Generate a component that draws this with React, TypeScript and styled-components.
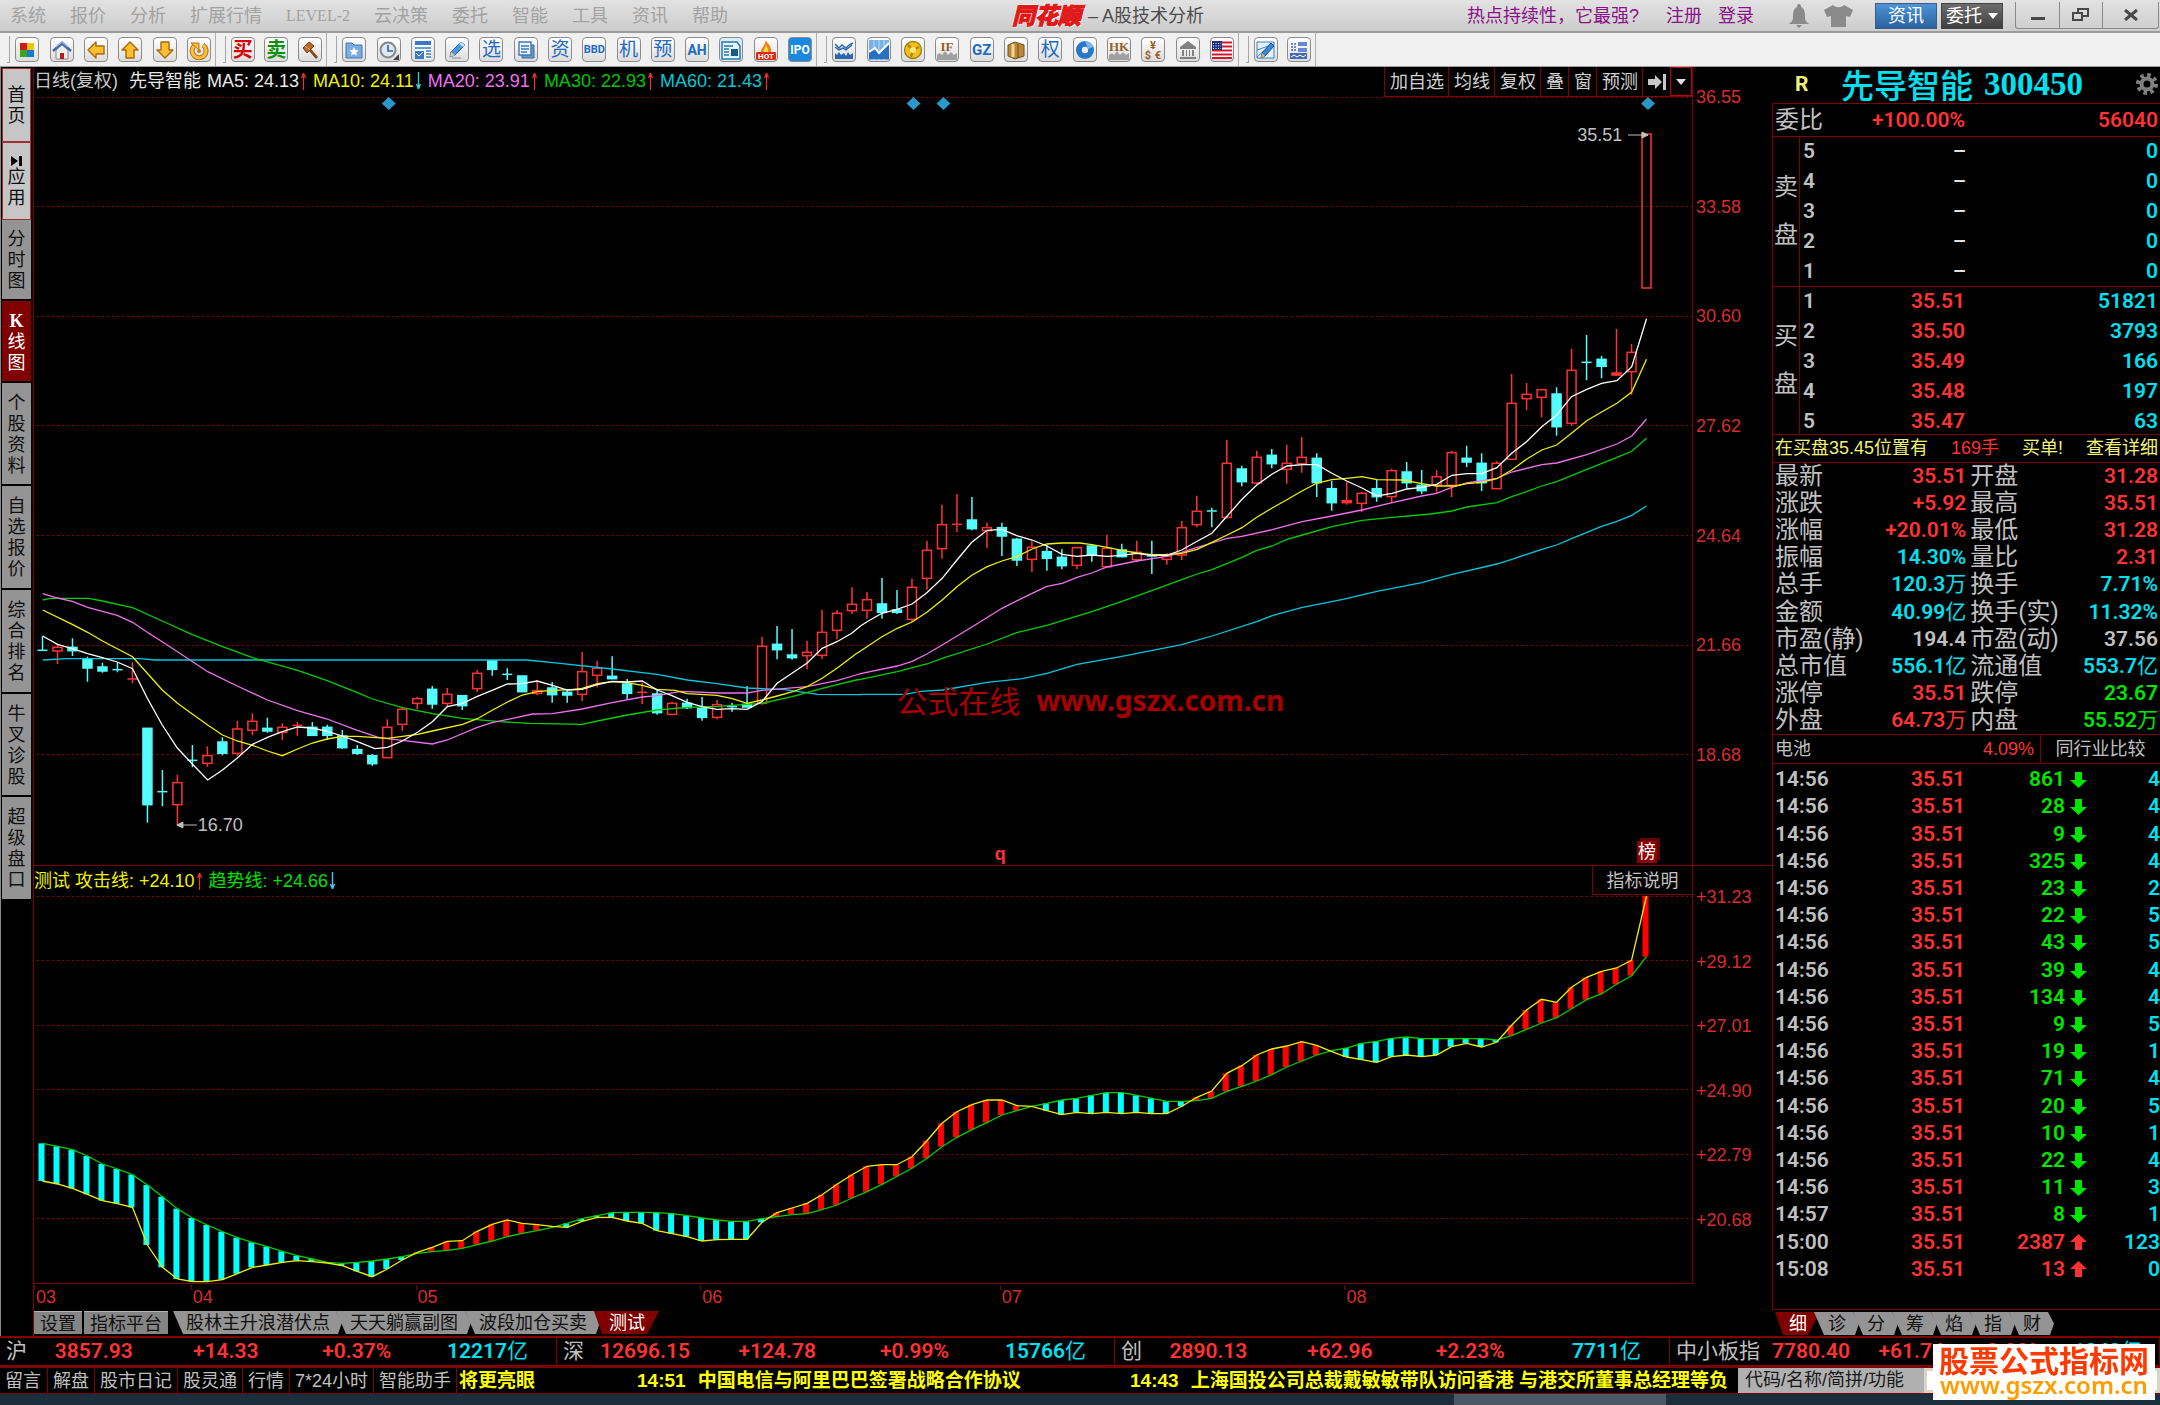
import React from "react";
import styled, { createGlobalStyle, css } from "styled-components";

const SANS = '"Liberation Sans", "Noto Sans CJK SC", sans-serif';
const DIGIT = 'Roboto, "Noto Sans CJK SC", sans-serif';
const RED = "#ff3232";
const CYAN = "#00e0f0";
const GREEN = "#00e600";
const LINE = "#800000";
const GRAY = "#c0c0c0";

const Global = createGlobalStyle`
  * { box-sizing: border-box; }
  body { margin: 0; background: #000; color: ${GRAY}; font: 18px/24px ${SANS}; overflow-x: hidden; }
  button { font: inherit; color: inherit; background: none; border: 0; padding: 0; margin: 0; white-space: nowrap; cursor: pointer; }
  a { color: inherit; text-decoration: none; }
  table { border-collapse: collapse; }
  td, th { padding: 0; font-weight: inherit; text-align: left; }
`;

const Page = styled.div`
  display: flex;
  flex-direction: column;
  min-height: 100vh;
`;

/* ---------- title bar ---------- */
const TitleBar = styled.header`
  display: flex;
  align-items: center;
  justify-content: space-between;
  height: 33px;
  background: linear-gradient(#e2e2e2, #cdcdcd);
  border-bottom: 2px solid #9a9a9a;
`;
const Menu = styled.nav`
  flex: 1 1 0;
  display: flex;
  gap: 24px;
  padding-left: 10px;
  color: #a2a2a2;
`;
const MenuItem = styled.button<{ $serif?: boolean }>`
  ${(p) => p.$serif && css`font: 16px/24px "Liberation Serif", serif;`}
`;
const Caption = styled.div`
  display: flex;
  align-items: center;
  gap: 7px;
  padding-left: 46px;
  color: #4c4c4c;
`;
const Brand = styled.strong`
  font-size: 23px;
  line-height: 28px;
  font-weight: 900;
  font-style: italic;
  color: #e01818;
  text-shadow: 0 0 2px #fff, 1px 1px 0 #fff, -1px -1px 0 #fff;
  -webkit-text-stroke: 1px #e01818;
`;
const TitleRight = styled.div`
  flex: 1 1 0;
  display: flex;
  align-items: center;
  justify-content: flex-end;
  color: #8a108a;
  white-space: nowrap;
`;
const TitleLink = styled.a<{ $gap: number }>`
  margin-right: ${(p) => p.$gap}px;
`;
const TitleIcon = styled.button<{ $gap: number }>`
  display: flex;
  color: #8a8a8a;
  margin-right: ${(p) => p.$gap}px;
`;
const PillButton = styled.button<{ $dark?: boolean }>`
  display: flex;
  align-items: center;
  justify-content: center;
  gap: 6px;
  width: 62px;
  height: 26px;
  margin-right: 4px;
  border: 1px solid #3c5c80;
  background: linear-gradient(#4c94d8, #2a62a0);
  color: #fff;
  ${(p) => p.$dark && css`background: linear-gradient(#6c6c6c, #404040); border-color: #444;`}
`;
const Caret = styled.span<{ $c: string }>`
  border: 5px solid transparent;
  border-top: 6px solid ${(p) => p.$c};
  border-bottom: 0;
`;
const WindowButtons = styled.div`
  display: flex;
  margin: 0 1px 0 8px;
  border: 1px solid #888;
  border-top: 0;
  border-radius: 0 0 3px 3px;
`;
const WindowButton = styled.button<{ $w: number }>`
  display: flex;
  align-items: center;
  justify-content: center;
  width: ${(p) => p.$w}px;
  height: 26px;
  color: #484848;
  & + & { border-left: 1px solid #888; }
`;

/* ---------- toolbar ---------- */
const Toolbar = styled.div`
  display: flex;
  height: 34px;
  background: #f0f0f0;
  border-bottom: 1px solid #a0a0a0;
`;
const ToolGroup = styled.div<{ $w: number }>`
  display: flex;
  align-items: center;
  justify-content: space-between;
  width: ${(p) => p.$w}px;
  padding: 0 4px 0 7px;
  border-right: 1px solid #b0b0b0;
  &::before {
    content: "";
    width: 2px;
    height: 26px;
    margin-right: -5px;
    border-right: 1px solid #a8a8a8;
    border-bottom: 1px solid #a8a8a8;
  }
`;
const Tile = styled.button<{ $c?: string; $s?: number; $bg?: string }>`
  display: flex;
  align-items: center;
  justify-content: center;
  width: 24px;
  height: 25px;
  border: 1px solid #8c8c8c;
  border-radius: 4px;
  overflow: hidden;
  background: ${(p) => p.$bg || "linear-gradient(#ffffff, #dcdcdc)"};
  color: ${(p) => p.$c || "#1f6cc0"};
  font: ${(p) => (p.$s ? 700 : 400)} ${(p) => p.$s || 19}px/22px Roboto, "Noto Sans CJK SC", sans-serif;
  svg { width: 20px; height: 20px; flex: none; }
`;

/* ---------- body columns ---------- */
const Columns = styled.div`
  display: flex;
`;
const SideTabs = styled.nav`
  flex: none;
  width: 34px;
  padding: 1px 2px 0 1px;
  border-left: 1px solid #888;
  border-right: 1px solid ${LINE};
  display: flex;
  flex-direction: column;
`;
const SideTab = styled.button<{ $h: number; $kind?: "light" | "active" }>`
  display: flex;
  flex-direction: column;
  align-items: center;
  justify-content: center;
  height: ${(p) => p.$h}px;
  border: 1px solid #000;
  border-width: 0 0 2px;
  padding-top: 2px;
  line-height: 21px;
  background: #949494;
  color: #101010;
  ${(p) => p.$kind === "light" && css`background: #c6c6c6; border: 1px solid #a03030;`}
  ${(p) => p.$kind === "active" && css`background: #800000; color: #fff;`}
`;
const SerifK = styled.span`
  font: bold 18px/21px "Liberation Serif", serif;
`;
const Center = styled.main`
  flex: 1 1 0;
  min-width: 0;
  display: flex;
  flex-direction: column;
`;
const Section = styled.section`
  display: flex;
  & + & { border-top: 1px solid ${LINE}; }
`;
const PlotColumn = styled.div<{ $floor?: boolean }>`
  flex: 1 1 0;
  min-width: 0;
  position: relative;
  border-right: 1px solid ${LINE};
  ${(p) => p.$floor && css`border-bottom: 1px solid ${LINE};`}
`;
const PlotHead = styled.div`
  display: flex;
  justify-content: space-between;
  height: 30px;
`;
const Legend = styled.div<{ $h: number }>`
  display: flex;
  align-items: center;
  gap: 6px;
  height: ${(p) => p.$h}px;
  white-space: nowrap;
`;
const LegendItem = styled.span<{ $c: string; $wide?: boolean }>`
  display: flex;
  align-items: center;
  gap: 1px;
  color: ${(p) => p.$c};
  ${(p) => p.$wide && css`margin-right: 5px;`}
`;
const Tools = styled.div`
  display: flex;
  height: 30px;
  border-bottom: 1px solid ${LINE};
`;
const Tool = styled.button<{ $hot?: boolean }>`
  display: flex;
  align-items: center;
  padding: 0 4px 0 5px;
  border-left: 1px solid ${LINE};
  color: #d0d0d0;
  ${(p) => p.$hot && css`border: 1px solid #c00000; padding: 0 5px;`}
`;
const Plot = styled.svg<{ $h: number }>`
  display: block;
  width: 100%;
  height: ${(p) => p.$h}px;
`;
const Axis = styled.div<{ $top: number; $h: number }>`
  flex: none;
  width: 79px;
  height: ${(p) => p.$top + p.$h}px;
  padding: ${(p) => p.$top}px 0 0 3px;
  display: flex;
  flex-direction: column;
  justify-content: space-between;
  line-height: 20px;
  color: #d82c2c;
`;
const Mark = styled.div<{ $x: number; $y: number; $c?: string }>`
  position: absolute;
  left: ${(p) => (p.$x / 1660) * 100}%;
  top: ${(p) => p.$y}px;
  display: flex;
  align-items: center;
  line-height: 20px;
  white-space: nowrap;
  color: ${(p) => p.$c || GRAY};
`;
const Watermark = styled.a`
  position: absolute;
  left: 52%;
  top: 611px;
  display: flex;
  align-items: center;
  gap: 16px;
  color: #a80000;
  font: 31px/44px "Noto Sans CJK SC", sans-serif;
  white-space: nowrap;
`;
const Domain = styled.span`
  font: bold 28px/44px "Noto Sans", sans-serif;
`;
const Badge = styled.span`
  padding: 0 1px;
  line-height: 22px;
  background: #900000;
  color: #fff;
  box-shadow: 3px -3px 0 #5a0808;
`;
const ExplainButton = styled.button`
  position: absolute;
  right: 0;
  top: 0;
  width: 100px;
  height: 29px;
  padding-top: 2px;
  border: 1px solid ${LINE};
  border-width: 0 0 1px 1px;
`;
const Months = styled.div`
  position: relative;
  height: 27px;
  margin-right: 80px;
`;
const Month = styled.span<{ $x: number }>`
  position: absolute;
  left: ${(p) => (p.$x / 1660) * 100}%;
  top: 1px;
  padding-left: 2px;
  color: #d82c2c;
  &::before { content: ""; position: absolute; left: 0; top: 0; height: 5px; border-left: 1px solid ${LINE}; }
`;
const BottomTabs = styled.div`
  display: flex;
  height: 24px;
  color: #101010;
`;
const PlainTab = styled.button`
  height: 23px;
  padding: 0 6px;
  margin-right: 2px;
  background: #858585;
  border-top: 1px solid #b0b0b0;
  line-height: 24px;
`;
const SlantTab = styled.button<{ $on?: boolean; $first?: boolean; $pad?: number }>`
  height: 23px;
  line-height: 25px;
  padding: 0 ${(p) => (p.$pad || 12) - 1}px 0 ${(p) => p.$pad || 12}px;
  margin-left: ${(p) => (p.$first ? 3 : -6)}px;
  background: #949494;
  clip-path: polygon(0 0, calc(100% - 6px) 0, 100% 50%, calc(100% - 4px) 100%, 10px 100%);
  ${(p) => p.$on && css`background: #800000; color: #fff; clip-path: polygon(0 0, 100% 0, calc(100% - 12px) 100%, 8px 100%);`}
`;

/* ---------- quote panel ---------- */
const Panel = styled.aside`
  flex: none;
  width: 388px;
  display: flex;
  flex-direction: column;
`;
const PanelHead = styled.div`
  display: flex;
  align-items: center;
  height: 36px;
  padding: 0 2px 2px 23px;
  color: ${CYAN};
`;
const RTag = styled.span`
  width: 46px;
  color: #f0f078;
  font: bold 21px/30px ${DIGIT};
`;
const StockName = styled.h1`
  flex: 1;
  display: flex;
  align-items: center;
  gap: 11px;
  margin: 0;
  font: 500 33px/34px "Noto Sans CJK SC", sans-serif;
`;
const StockCode = styled.span`
  font: bold 33px/34px "Liberation Serif", serif;
`;
const PanelBox = styled.div`
  height: 1207px;
  border: 1px solid ${LINE};
  border-width: 1px 0 1px 1px;
  font: 500 21px/27px ${DIGIT};
`;
const Row = styled.div<{ $h: number }>`
  display: flex;
  align-items: center;
  height: ${(p) => p.$h}px;
  padding: 0 2px;
  border-bottom: 1px solid ${LINE};
`;
const Label = styled.span`
  font-size: 24px;
  font-weight: 400;
`;
const Num = styled.span<{ $c?: string; $w?: number }>`
  color: ${(p) => p.$c || RED};
  font-weight: 600;
  text-align: right;
  ${(p) => (p.$w ? css`width: ${p.$w}px;` : css`flex: 1;`)}
`;
const Book = styled.div`
  display: flex;
  height: 150px;
  padding-top: 1px;
  border-bottom: 1px solid ${LINE};
  & + & { height: 148px; }
`;
const BookSide = styled.div`
  width: 27px;
  margin-top: -1px;
  display: flex;
  flex-direction: column;
  align-items: center;
  justify-content: center;
  gap: 21px;
  border-right: 1px solid ${LINE};
  font-size: 24px;
  font-weight: 400;
`;
const Levels = styled.div`
  flex: 1;
  display: flex;
  flex-direction: column;
  gap: 3px;
`;
const Level = styled.div`
  display: flex;
  height: 27px;
  padding: 0 2px 0 3px;
`;
const Notice = styled(Row)`
  justify-content: space-between;
  padding-bottom: 2px;
  font: 18px/24px ${SANS};
  color: #f0f078;
`;
const Red = styled.span`
  color: ${RED};
`;
const Unit = styled.span`
  font-weight: 400;
`;
const QuoteTable = styled.table`
  width: 100%;
  height: 271px;
  td { height: 27px; line-height: 27px; white-space: nowrap; }
  th { font-size: 24px; line-height: 27px; font-weight: 400; padding-left: 2px; white-space: nowrap; width: 60px; }
`;
const ValueCell = styled.td<{ $c: string }>`
  && { text-align: right; }
  color: ${(p) => p.$c};
  font-weight: 600;
  padding-right: 2px;
  width: 133px;
`;
const Sector = styled(Row)`
  padding: 0;
  border-top: 1px solid ${LINE};
  font: 18px/24px ${SANS};
`;
const SectorCell = styled.a<{ $w: number; $r?: boolean }>`
  width: ${(p) => p.$w}px;
  padding: 0 6px 0 2px;
  text-align: ${(p) => (p.$r ? "right" : "left")};
`;
const Peer = styled.button`
  flex: 1;
  height: 100%;
  border-left: 1px solid ${LINE};
`;
const TickTable = styled.table`
  width: 100%;
  height: 517px;
  margin-top: 2px;
  table-layout: fixed;
  font-weight: 600;
  td { line-height: 27px; white-space: nowrap; }
`;
const TickCell = styled.td<{ $c: string; $w?: number; $r?: boolean }>`
  && { text-align: ${(p) => (p.$r ? "right" : "left")}; }
  width: ${(p) => (p.$w ? p.$w + "px" : "auto")};
  color: ${(p) => p.$c};
  padding-left: ${(p) => (p.$r ? 0 : 2)}px;
`;
const ArrowCell = styled.td`
  width: 30px;
  padding-left: 5px;
  svg { display: block; }
`;
const PanelTabs = styled(BottomTabs)`
  margin-top: 2px;
`;

/* ---------- status rows ---------- */
const IndexBar = styled.div`
  display: grid;
  grid-template-columns: 557fr 558fr 555fr 490fr;
  height: 32px;
  border: solid ${LINE};
  border-width: 2px 0 3px;
  font: 600 21px/27px ${DIGIT};
`;
const IndexCell = styled.div<{ $wide?: boolean }>`
  display: grid;
  grid-template-columns: ${(p) => (p.$wide ? "84px 90px 94px 100px 98px" : "21px 106fr 126fr 133fr 137fr")};
  padding: 0 ${(p) => (p.$wide ? 12 : 28)}px 0 6px;
  text-align: right;
  white-space: nowrap;
  border-right: 1px solid ${LINE};
  color: ${RED};
  b { font-weight: 400; color: ${GRAY}; text-align: left; font-size: 21px; }
  i { font-style: normal; color: ${CYAN}; }
`;
const NewsBar = styled.div`
  display: flex;
  height: 26px;
  border-bottom: 1px solid ${LINE};
`;
const NewsButton = styled.button`
  padding: 0 6px 0 5px;
  border-right: 1px solid ${LINE};
  & + & { padding: 0 5px; }
`;
const Ticker = styled.div`
  flex: 1 1 0;
  display: flex;
  overflow: hidden;
  padding-left: 2px;
  color: #ffff00;
  font: bold 19px/25px ${SANS};
  white-space: nowrap;
`;
const Story = styled.a<{ $w: number }>`
  flex: none;
  display: flex;
  gap: 12px;
  width: ${(p) => p.$w}px;
`;
const SearchLabel = styled.label`
  width: 186px;
  padding-left: 7px;
  background: #b0b0b0;
  color: #181818;
`;
const SearchInput = styled.input`
  width: 236px;
  border: 3px solid #d8d4c8;
  background: #fff;
  font: inherit;
`;
const Taskbar = styled.div`
  flex: 1;
  min-height: 12px;
  padding-left: 1454px;
  background: #1b2e3b;
  &::before { content: ""; display: block; width: 212px; height: 12px; background: #4a5963; }
`;
const SiteMark = styled.a`
  position: fixed;
  right: 5px;
  bottom: 5px;
  width: 222px;
  height: 56px;
  background: #fff;
  text-align: center;
  color: #ff3a00;
  font: bold 30px/31px "Noto Sans CJK SC", sans-serif;
  white-space: nowrap;
  span { display: block; font: 600 24px/20px "Noto Sans", sans-serif; color: #ff9c00; }
`;

/* ---------- series data ---------- */
type Candle = [string, number, number, number, number];
/* kind, high, body top, body bottom, low: thirds of a pixel below a base line */
const EARLY = `c 228 271 273 273|r 252 262 273 312|c 235 262 272 288|c 290 297 324 365|c 308 321 333 338|c 308 329 331 337|r 307 357 359 370|c 505 505 734 788|c 630 695 697 739|r 644 668 734 795|c 555 601 603 622|r 559 587 610 620|c 532 546 580 586|r 483 507 580 587|r 460 484 511 526|c 473 505 513 518|r 490 502 517 540|r 486 496 500 527|c 486 502 526 526|c 494 502 526 540|c 510 528 563 567|c 555 569 580 585|c 582 587 611 617|r 478 502 593 593|r 440 448 493 512|r 410 416 430 448|c 378 388 432 446|r 384 403 430 438|c 405 407 437 450|r 330 340 386 396|c 300 302 328 347|c 325 343 345 360|c 347 348 395 397|r 360 392 400 406|c 366 384 404 428|c 392 397 405 428|r 276 335 403 423|r 303 325 346 382|c 289 349 356 358|c 357 372 400 418|r 367 397 400 432|c 390 402 458 464|r 425 430 463 466|c 416 430 443 447|c 411 445 472 482|r 420 434 472 478|c 428 440 442 455|c 378 433 441 443|r 230 259 430 434|c 198 253 269 298|c 207 285 293 299|r 243 277 287 328|r 150 217 286 297|r 150 160 211 238|r 82 133 152 162`;
const LATE = `r 876 899 931 956|c 834 912 937 956|c 870 930 937 942|r 836 862 958 966|r 722 751 835 869|r 614 674 746 776|r 582 673 675 696|c 591 660 686 691|r 668 683 692 744|c 668 683 708 768|c 714 718 780 798|r 724 742 778 816|c 735 755 775 812|c 748 772 797 808|r 740 743 796 807|c 732 738 765 785|r 704 745 800 802|c 731 750 770 772|r 722 757 779 786|c 722 768 772 822|r 760 768 778 794|r 663 683 765 780|r 587 634 674 682|c 623 633 635 682|r 420 490 652 656|c 497 507 545 559|r 452 472 549 552|c 447 466 491 505|r 434 490 508 551|r 411 472 491 518|c 460 475 548 591|c 543 566 608 632|f 545 602 608 614|r 576 580 610 636|c 540 566 590 605|r 506 512 590 610|c 486 516 548 566|c 510 556 572 582|r 511 530 555 580|r 452 458 556 591|c 437 475 486 501|c 460 490 548 573|r 484 490 566 568|r 222 310 478 480|r 249 283 296 330|r 268 269 292 352|c 262 282 380 407|r 146 211 370 378|c 105 187 189 241|c 168 178 199 235|f 87 219 225 228|r 132 157 215 285|r -498 -498 -36 -36`;
const parseCandles = (s: string, base: number): Candle[] =>
  s.split("|").map((t) => {
    const [k, ...n] = t.split(" ");
    return [k, ...n.map((v) => base + Number(v) / 3)] as Candle;
  });
const CANDLES = [...parseCandles(EARLY, 560), ...parseCandles(LATE, 300)];
const candleX = (i: number) => 41.5 + 15 * i;

const K = 1568 / 860;
const curve = (early: string, late: string) => {
  const part = (s: string, x0: number, y0: number) =>
    s.split(" ").map((p) => {
      const [x, y] = p.split(",").map(Number);
      return `${(x0 + x / K).toFixed(1)},${(y0 + y / 3).toFixed(1)}`;
    });
  return [...part(early, 0, 560), ...part(late, 860, 300)].join(" ");
};
const AVERAGES = [
  { c: "#00c8e0", p: curve("76,300 120,296 255,296 280,300 960,300 1020,310 1115,327 1197,343 1252,360 1306,371 1361,384 1430,389 1490,403 1568,404", "0,1183 80,1183 110,1174 150,1170 231,1147 295,1136 340,1120 395,1093 477,1069 586,1034 641,1008 723,965 751,947 806,922 880,898 942,874 1024,848 1079,823 1161,792 1188,778 1243,748 1270,735 1297,716 1352,679 1380,664 1407,646 1434,618") },
  { c: "#00d000", p: curve("76,120 90,115 160,115 185,123 240,143 294,183 349,224 404,260 459,293 541,331 595,362 650,398 678,417 732,443 787,461 842,475 910,485 965,490 1060,493 1088,483 1142,465 1197,450 1252,442 1306,439 1388,430 1443,410 1470,398 1498,385 1560,360", "0,1138 67,1115 121,1092 149,1075 231,1032 285,998 340,976 422,935 477,904 531,872 586,839 614,822 641,809 696,772 723,751 751,738 778,718 806,705 860,680 915,661 970,652 1040,642 1079,633 1106,621 1161,608 1188,590 1215,575 1243,558 1270,545 1325,508 1380,472 1407,454 1434,415") },
  { c: "#f070f0", p: curve("76,101 103,114 130,124 158,142 212,166 240,187 267,217 294,245 322,275 377,335 431,378 486,420 541,452 595,477 650,511 690,533 732,541 787,552 814,540 869,502 896,488 970,462 1006,461 1060,447 1115,428 1170,411 1197,407 1240,394 1310,399 1361,399 1388,391 1470,380 1525,362 1560,345", "0,1121 67,1098 94,1084 121,1062 149,1035 204,980 258,925 313,880 340,859 368,850 395,832 422,819 450,801 504,783 559,769 586,757 614,742 641,729 669,715 696,709 751,689 806,665 860,648 915,630 970,608 1024,588 1051,580 1079,562 1106,549 1161,535 1188,516 1243,494 1270,489 1325,464 1380,432 1407,408 1434,357") },
  { c: "#f0f000", p: curve("76,150 130,193 158,217 185,243 240,290 267,340 294,390 322,430 349,462 377,495 404,525 431,543 459,556 486,573 513,587 541,567 568,549 595,537 623,529 650,529 705,535 732,529 760,523 787,513 842,493 869,476 896,451 924,426 951,405 978,395 1006,391 1040,389 1060,385 1088,371 1115,365 1142,368 1170,376 1197,388 1230,391 1252,401 1306,406 1334,416 1361,430 1388,420 1416,408 1443,396 1470,380 1498,355 1525,325 1560,281", "0,1053 39,1010 67,985 94,966 121,937 149,900 176,860 203,826 231,800 258,783 285,770 313,747 340,732 368,729 400,729 422,734 450,742 477,751 504,759 531,764 559,764 586,760 614,748 641,727 669,705 696,683 723,652 751,624 778,599 806,572 833,549 860,539 887,535 915,530 942,539 990,540 1024,551 1051,558 1085,558 1106,551 1133,547 1161,536 1188,510 1215,478 1243,450 1270,435 1297,400 1325,362 1352,336 1380,310 1407,276 1434,178") },
  { c: "#ffffff", p: curve("76,228 103,253 130,266 158,281 185,293 212,306 240,326 267,415 294,495 322,565 349,612 377,660 404,630 431,594 459,553 486,532 513,515 541,501 568,504 595,514 623,528 650,545 682,566 705,562 732,543 760,517 787,485 814,440 842,430 869,409 896,391 924,372 951,371 978,363 1006,376 1033,390 1060,388 1088,374 1115,364 1142,366 1170,363 1197,390 1224,407 1252,427 1279,440 1306,448 1334,446 1361,448 1388,425 1416,370 1443,340 1470,310 1498,265 1525,245 1552,220", "0,978 12,965 39,940 67,928 94,912 121,878 149,835 176,780 203,727 231,691 258,688 285,707 313,720 340,738 368,763 395,769 422,765 450,769 477,766 504,760 531,766 559,766 586,750 614,724 641,700 669,648 696,598 723,555 751,522 778,498 806,494 833,494 860,520 887,543 915,564 942,588 970,580 997,567 1024,562 1051,553 1079,526 1106,521 1133,521 1161,503 1188,460 1215,425 1243,380 1270,345 1297,290 1325,268 1352,250 1380,242 1407,200 1434,56") },
];

const nums = (s: string, base: number) => s.split(" ").map((v) => base + Number(v) / 3);
const TREND = [
  ...nums("913 922 932 951 975 990 1007 1038 1073 1109 1137 1158 1178 1196 1210 1223 1237 1250 1260 1270 1273 1270 1266 1260 1253 1243 1238 1234 1228 1217 1206 1193 1183 1175 1165 1153 1139 1130 1121 1120 1120 1121 1124 1130 1137 1143 1147 1147 1139 1133 1127 1124 1112 1098 1077", 840),
  ...nums("1118 1096 1072 1048 1018 983 955 932 911 888 875 862 853 843 838 829 821 821 829 838 847 847 845 838 817 802 786 767 744 726 708 695 687 673 667 658 654 659 659 659 659 659 663 650 631 612 596 569 542 524 496 470 413", 820),
];
const ATTACK = [
  ...nums("1026 1035 1048 1066 1085 1094 1105 1218 1285 1320 1328 1328 1322 1304 1285 1278 1270 1265 1268 1272 1280 1297 1313 1290 1263 1240 1225 1207 1205 1177 1156 1143 1153 1157 1162 1165 1147 1135 1135 1146 1153 1175 1184 1193 1206 1202 1201 1201 1150 1121 1107 1093 1067 1036 1007", 840),
  ...nums("1042 1037 1037 1013 965 913 878 857 843 843 860 862 875 887 880 884 880 884 880 884 884 862 835 816 763 740 708 690 681 668 679 698 714 722 730 713 708 713 708 683 673 684 670 619 573 541 550 505 475 457 447 424 231", 820),
];
const toPoints = (a: number[]) => a.map((y, i) => `${candleX(i)},${y.toFixed(1)}`).join(" ");

/* ---------- small drawings ---------- */
const Arrow = ({ up, c }: { up?: boolean; c: string }) => (
  <svg width="7" height="18" viewBox="0 0 7 18" fill="none" stroke={c}>
    {up ? <path d="M3.5 18V2M3.5 1l-2 5M3.5 1l2 5" strokeWidth="1.2" /> : <path d="M3.5 0V16M3.5 17l-2-5M3.5 17l2-5" strokeWidth="1.4" />}
  </svg>
);
const FatArrow = ({ up }: { up?: boolean }) => (
  <svg width="17" height="17" viewBox="0 0 17 17">
    <path fill={up ? RED : GREEN} d={up ? "M8.5 0L17 8H12V16H5V8H0Z" : "M8.5 17L17 9H12V1H5V9H0Z"} />
  </svg>
);
const Bank = (
  <svg viewBox="0 0 20 20" fill="#808080"><path d="M10 1l8 6v2H2V7zM4 10h2v6H4zM8 10h1v6H8zM11 10h1v6h-1zM14 10h2v6h-2zM2 17h16v2H2z" /></svg>
);
const arrowIcon = (r: number) => (
  <svg viewBox="0 0 20 20"><path transform={`rotate(${r} 10 10)`} d="M2 10L10 2V6H18V14H10V18Z" fill="#ffc030" stroke="#a86810" strokeWidth="1.4" strokeLinejoin="round" /></svg>
);
const I = {
  squares: <svg viewBox="0 0 20 20"><path fill="#d81818" d="M3 3h7v7H3z" /><path fill="#e8c800" d="M10 3h7v7h-7z" /><path fill="#38a818" d="M3 10h7v7H3z" /><path fill="#1878d8" d="M10 10h7v7h-7z" /></svg>,
  home: <svg viewBox="0 0 20 20"><path d="M4 10v9h12v-9l-6-5z" fill="#eee" stroke="#888" /><path d="M8 13h4v6H8z" fill="#b02020" /><path d="M1 11l9-8 9 8" fill="none" stroke="#4068b0" strokeWidth="2.4" /><path d="M4 7l6-5 6 5" fill="none" stroke="#88a8d8" strokeWidth="1.5" /></svg>,
  loop: <svg viewBox="0 0 20 20"><path d="M14 5a7 7 0 1 1-9 1" fill="none" stroke="#b87018" strokeWidth="5" /><path d="M14 5a7 7 0 1 1-9 1" fill="none" stroke="#ffc040" strokeWidth="3" /><path d="M2 3h8v7z" fill="#ffc040" stroke="#b87018" /><circle cx="10" cy="11" r="2" fill="#c88020" /></svg>,
  gavel: <svg viewBox="0 0 20 20"><path d="M11 9l7 8-2 2-7-8z" fill="#8a4a18" /><path d="M3 8l6-6 5 4-7 7z" fill="#b86828" stroke="#7a3c10" /><path d="M5 6l5 4" stroke="#e8b070" /></svg>,
  folder: <svg viewBox="0 0 20 20"><path d="M2 3h6l2 2h8v13H2z" fill="#7aace0" stroke="#3c78b8" /><path d="M10 7l1.4 3 3.2.3-2.4 2.2.7 3.2-2.9-1.7-2.9 1.7.7-3.2-2.4-2.2 3.2-.3z" fill="#fff" /></svg>,
  clock: <svg viewBox="0 0 20 20"><circle cx="9" cy="10" r="7.5" fill="#dce8f4" stroke="#888" strokeWidth="2" /><path d="M9 5v6h5" fill="none" stroke="#3060a8" strokeWidth="1.6" /><path d="M20 14v6h-6z" fill="#444" /></svg>,
  sheet: <svg viewBox="0 0 20 20"><path fill="#fff" d="M2 1h16v18H2z" /><path fill="#3878c8" d="M2 1h16v4H2zM2 11h9v8H2z" /><path d="M2 8h16M13 11h5M13 14h5M13 17h5" stroke="#3878c8" strokeWidth="1.4" /><path d="M3 13l3 3 4-4" stroke="#fff" fill="none" /></svg>,
  pencil: <svg viewBox="0 0 20 20"><path d="M3 17l1-5L14 2l4 3L8 15z" fill="#4898e0" stroke="#2868a8" /><path d="M3 17l1-5 4 3z" fill="#e8c898" /><path d="M14 2l4 3-2 2-4-3z" fill="#c8e0f8" /><path d="M5 18h9" stroke="#888" /></svg>,
  pages: <svg viewBox="0 0 20 20"><path d="M6 5h12v13H6z" fill="#6898c8" stroke="#386898" /><path d="M3 2h12v13H3z" fill="#eef5fc" stroke="#3c78b8" strokeWidth="1.4" /><path d="M5 6h8M5 9h8M5 12h6" stroke="#3c78b8" strokeWidth="1.3" /></svg>,
  news: <svg viewBox="0 0 20 20"><path d="M1 2h15l3 4v13H1z" fill="#e8f4fc" stroke="#2878a8" strokeWidth="1.5" /><path d="M3 6h9M3 9h5M3 12h5M3 15h5" stroke="#2878a8" strokeWidth="1.5" /><path d="M10 9h7v7h-7z" fill="#185888" /></svg>,
  hot: <svg viewBox="0 0 20 20"><path d="M10 0c1 4 6 5 5 13H5C4 9 8 8 10 0z" fill="#f08018" /><path d="M10 5c1 3 3 4 2 8H8c-1-3 1-4 2-8z" fill="#ffe040" /><rect y="12" width="20" height="8" rx="1" fill="#e02818" /><text x="10" y="19" textAnchor="middle" fontSize="8" fontWeight="bold" fill="#fff" fontFamily="Roboto">HOT</text></svg>,
  waves: <svg viewBox="0 0 20 20"><path d="M1 4l4 4 3-3 4 3 3-3 4-2M1 7l4 3 4-2 3 2 6-5" fill="none" stroke="#2868b0" strokeWidth="1.4" /><path d="M1 19v-6l2 2 2-3 2 3 3-2 2 3 2-4 2 3 3-2v6z" fill="#2868b0" /></svg>,
  chart: <svg viewBox="0 0 20 20"><path d="M0 0h20v20H0z" fill="#78b0e8" /><path d="M5 0v20M10 0v20M15 0v20" stroke="#b8d8f8" /><path d="M0 19v-7l6-4 4 5 10-9v15z" fill="#2870c0" /><path d="M0 12l6-4 4 5 10-10" fill="none" stroke="#fff" strokeWidth="2" /></svg>,
  coin: <svg viewBox="0 0 20 20"><circle cx="10" cy="10" r="8.5" fill="#f0c020" stroke="#a87c08" strokeWidth="1.3" /><path d="M10 10L5 5M10 10l6-3M10 10l-2 7" stroke="#b08808" strokeWidth="2.5" /><circle cx="10" cy="10" r="3" fill="#ffe878" /></svg>,
  barrel: <svg viewBox="0 0 20 20"><path d="M2 5l7-3 9 3v11l-9 3-7-3z" fill="#b88838" stroke="#785018" /><path d="M7 4v13" stroke="#f0d898" strokeWidth="3" /><path d="M12 4v14" stroke="#785018" /></svg>,
  disc: <svg viewBox="0 0 20 20"><circle cx="10" cy="10" r="9" fill="#2878c8" /><circle cx="10" cy="10" r="3.2" fill="#e8f0f8" /><path d="M10 1a9 9 0 0 1 8 6l-5 2z" fill="#78b8f0" /></svg>,
  flag: <svg viewBox="0 0 20 20"><path fill="#fff" d="M0 1h20v18H0z" /><path d="M0 2.5h20M0 6.5h20M0 10.5h20M0 14.5h20M0 18h20" stroke="#d01830" strokeWidth="2" /><path fill="#203080" d="M0 1h10v9H0z" /><path d="M1 3.5h8M1 6h8M1 8.5h8" stroke="#fff" strokeDasharray="1 1.5" /></svg>,
  draw: <svg viewBox="0 0 20 20"><path d="M1 2h17v16H1z" fill="#e4f0fc" stroke="#4080c0" /><path d="M1 10l17-6M1 17l10-9" stroke="#4080c0" /><path d="M5 18l1-5L15 3l3 3-9 10z" fill="#3888d8" stroke="#205090" /><path d="M5 18l1-5 3 3z" fill="#e8b060" /></svg>,
  layout: <svg viewBox="0 0 20 20"><path d="M2 4h5M2 7h5M2 10h5" stroke="#4868b0" strokeWidth="1.6" strokeDasharray="2 1" /><path d="M9 2h9v4H9zM9 8h9v4H9z" fill="#6888d0" /><path d="M1 13h17v6H1z" fill="#4868b0" /><path d="M2 17l3-2 3 2 3-2 3 2 3-2" stroke="#fff" fill="none" /></svg>,
  forex: <svg viewBox="0 0 20 20" fontSize="11" fontWeight="bold" fill="#98602c" fontFamily="Roboto"><text x="10" y="9" textAnchor="middle">¥</text><text x="5" y="19" textAnchor="middle">$</text><text x="15" y="19" textAnchor="middle">€</text></svg>,
};
const hill = (t: string) => (
  <svg viewBox="0 0 20 20"><path d="M0 20v-5l3-2 2 2 3-4 3 4 3-3 3 3 3-2v7z" fill="#a0a0a0" /><text x="10" y="11" textAnchor="middle" fontSize="13" fontWeight="bold" fill="#98602c" fontFamily="Liberation Serif">{t}</text></svg>
);

type ToolDef = { n: string; i?: React.ReactNode; t?: string; c?: string; s?: number; bg?: string };
const TOOL_GROUPS: { w: number; items: ToolDef[] }[] = [
  { w: 216, items: [{ n: "板块", i: I.squares }, { n: "主页", i: I.home }, { n: "后退", i: arrowIcon(0) }, { n: "上翻", i: arrowIcon(90) }, { n: "下翻", i: arrowIcon(270) }, { n: "刷新", i: I.loop }] },
  { w: 111, items: [{ n: "买入", t: "买", c: "#d80000", s: 20 }, { n: "卖出", t: "卖", c: "#109010", s: 20 }, { n: "交易", i: I.gavel }] },
  { w: 490, items: [{ n: "自选", i: I.folder }, { n: "分时", i: I.clock }, { n: "报表", i: I.sheet }, { n: "画笔", i: I.pencil }, { n: "选股", t: "选" }, { n: "研报", i: I.pages }, { n: "资金", t: "资" }, { n: "大单", t: "BBD", s: 11 }, { n: "机构", t: "机" }, { n: "预测", t: "预" }, { n: "AH股", t: "AH", s: 14 }, { n: "资讯", i: I.news, bg: "#d8ecf8" }, { n: "热点", i: I.hot }, { n: "新股", t: "IPO", s: 12, c: "#fff", bg: "#1888e0" }] },
  { w: 422, items: [{ n: "指数", i: I.waves }, { n: "走势", i: I.chart }, { n: "期货", i: I.coin }, { n: "股指", i: hill("IF") }, { n: "国债", t: "GZ", s: 15 }, { n: "原油", i: I.barrel }, { n: "权证", t: "权" }, { n: "基金", i: I.disc }, { n: "港股", i: hill("HK") }, { n: "外汇", i: I.forex }, { n: "银行", i: Bank }, { n: "美股", i: I.flag }] },
  { w: 77, items: [{ n: "画线", i: I.draw }, { n: "版面", i: I.layout }] },
];

const QUOTES: [string, string, string, string, string, string][] = [
  ["最新", "35.51", RED, "开盘", "31.28", RED],
  ["涨跌", "+5.92", RED, "最高", "35.51", RED],
  ["涨幅", "+20.01%", RED, "最低", "31.28", RED],
  ["振幅", "14.30%", CYAN, "量比", "2.31", RED],
  ["总手", "120.3万", CYAN, "换手", "7.71%", CYAN],
  ["金额", "40.99亿", CYAN, "换手(实)", "11.32%", CYAN],
  ["市盈(静)", "194.4", GRAY, "市盈(动)", "37.56", GRAY],
  ["总市值", "556.1亿", CYAN, "流通值", "553.7亿", CYAN],
  ["涨停", "35.51", RED, "跌停", "23.67", GREEN],
  ["外盘", "64.73万", RED, "内盘", "55.52万", GREEN],
];
const TICKS = "861 4,28 4,9 4,325 4,23 2,22 5,43 5,39 4,134 4,9 5,19 1,71 4,20 5,10 1,22 4,11 3,8 1,2387 123,13 0"
  .split(",")
  .map((t, i) => {
    const [v, n] = t.split(" ");
    return { time: i < 16 ? "14:56" : ["14:57", "15:00", "15:08"][i - 16], v, n, up: i > 16 };
  });
const SELL = ["5", "4", "3", "2", "1"];
const BUY = [["1", "35.51", "51821"], ["2", "35.50", "3793"], ["3", "35.49", "166"], ["4", "35.48", "197"], ["5", "35.47", "63"]];
const SIDE: { t: string; h: number; kind?: "light" | "active" }[] = [
  { t: "首页", h: 74, kind: "light" }, { t: "应用", h: 78, kind: "light" }, { t: "分时图", h: 81 }, { t: "K线图", h: 82, kind: "active" },
  { t: "个股资料", h: 103 }, { t: "自选报价", h: 104 }, { t: "综合排名", h: 104 }, { t: "牛叉诊股", h: 103 }, { t: "超级盘口", h: 104 },
];
const INDICES = [
  ["沪", "3857.93", "+14.33", "+0.37%", "12217亿"],
  ["深", "12696.15", "+124.78", "+0.99%", "15766亿"],
  ["创", "2890.13", "+62.96", "+2.23%", "7711亿"],
  ["中小板指", "7780.40", "+61.74", "+0.80%", "1243亿"],
];

const Amount = ({ v }: { v: string }) => {
  const unit = /[万亿]$/.test(v) ? v.slice(-1) : "";
  return <>{unit ? v.slice(0, -1) : v}{unit && <Unit>{unit}</Unit>}</>;
};

const Grid = ({ ys }: { ys: number[] }) => (
  <g stroke="#900000" strokeDasharray="2 3">
    {ys.map((y) => <line key={y} x1="36" x2="1693" y1={y} y2={y} />)}
  </g>
);

const MainPlot = () => (
  <Plot $h={768} viewBox="33 97 1659 768" preserveAspectRatio="none">
    <Grid ys={[97.5, 206.5, 316.5, 425.5, 535.5, 645.5, 754.5]} />
    {[388, 913, 943, 1648].map((x) => <path key={x} d={`M${x} 97l7 6.5-7 6.5-7-6.5z`} fill="#2898c8" />)}
    {CANDLES.map(([k, hi, top, bot, lo], i) => {
      const x = candleX(i);
      const h = bot - top;
      const c = k === "c" ? "#54fcfc" : RED;
      const flat = h < 1.5;
      return (
        <g key={i} stroke={c} strokeWidth="1.5" fill="none">
          <path d={`M${x} ${hi}V${top}M${x} ${bot}V${lo}`} />
          {flat ? <path d={`M${x - 5} ${top}h10`} /> : <rect x={x - 4.5} y={top} width="9" height={h} fill={k === "r" ? "none" : c} />}
        </g>
      );
    })}
    {AVERAGES.map((a) => <polyline key={a.c} points={a.p} fill="none" stroke={a.c} strokeWidth="1.3" />)}
    <path d="M176 825h20M176 825l6-3v6zM1648 135h-20M1648 135l-6-3v6z" stroke="#c0c0c0" fill="#c0c0c0" />
  </Plot>
);

const IndicatorPlot = () => (
  <Plot $h={388} viewBox="33 896 1659 388" preserveAspectRatio="none">
    <Grid ys={[897.5, 961.5, 1026.5, 1090.5, 1155.5, 1219.5]} />
    {TREND.map((g, i) => {
      const y = ATTACK[i];
      return <rect key={i} x={candleX(i) - 4} y={Math.min(g, y)} width="6" height={Math.abs(g - y)} fill={y < g ? "#ff0000" : "#00ffff"} />;
    })}
    <polyline points={toPoints(TREND)} fill="none" stroke="#00d000" strokeWidth="1.3" />
    <polyline points={toPoints(ATTACK)} fill="none" stroke="#f0f000" strokeWidth="1.3" />
  </Plot>
);

export default function App() {
  return (
    <Page>
      <Global />
      <TitleBar>
        <Menu>
          {["系统", "报价", "分析", "扩展行情", "LEVEL-2", "云决策", "委托", "智能", "工具", "资讯", "帮助"].map((m) => (
            <MenuItem key={m} $serif={m === "LEVEL-2"}>{m}</MenuItem>
          ))}
        </Menu>
        <Caption><Brand>同花顺</Brand><span>– A股技术分析</span></Caption>
        <TitleRight>
          <TitleLink href="#hot" $gap={27}>热点持续性，它最强?</TitleLink>
          <TitleLink href="#reg" $gap={16}>注册</TitleLink>
          <TitleLink href="#login" $gap={34}>登录</TitleLink>
          <TitleIcon $gap={14} aria-label="提醒">
            <svg width="22" height="24" viewBox="0 0 22 24" fill="currentColor"><path d="M11 0c2 0 2 2 2 3 4 2 4 6 4 11 0 3 2 4 4 6H1c2-2 4-3 4-6C5 9 5 5 9 3c0-1 0-3 2-3zM8 21h6l-3 3z" /></svg>
          </TitleIcon>
          <TitleIcon $gap={22} aria-label="皮肤">
            <svg width="29" height="22" viewBox="0 0 29 22" fill="currentColor"><path d="M9 0c3 3 8 3 11 0l9 5-3 7-4-1v11H7V11l-4 1-3-7z" /></svg>
          </TitleIcon>
          <PillButton>资讯</PillButton>
          <PillButton $dark>委托<Caret $c="#fff" /></PillButton>
          <WindowButtons>
            <WindowButton $w={43} aria-label="最小化"><svg width="14" height="14"><path d="M0 9h14v3H0z" fill="currentColor" /></svg></WindowButton>
            <WindowButton $w={43} aria-label="还原"><svg width="18" height="14" fill="none" stroke="currentColor" strokeWidth="2"><path d="M1 5h9v7H1zM6 5V1h10v7h-6" /></svg></WindowButton>
            <WindowButton $w={56} aria-label="关闭"><svg width="14" height="12" stroke="currentColor" strokeWidth="3"><path d="M1 1l12 10M13 1L1 11" /></svg></WindowButton>
          </WindowButtons>
        </TitleRight>
      </TitleBar>
      <Toolbar>
        {TOOL_GROUPS.map((g, k) => (
          <ToolGroup key={k} $w={g.w}>
            {g.items.map((t) => <Tile key={t.n} aria-label={t.n} $c={t.c} $s={t.s} $bg={t.bg}>{t.i || t.t}</Tile>)}
          </ToolGroup>
        ))}
      </Toolbar>

      <Columns>
        <SideTabs>
          {SIDE.map((s) => (
            <SideTab key={s.t} $h={s.h} $kind={s.kind}>
              {s.t === "应用" && <svg width="12" height="12" viewBox="0 0 12 12"><path d="M0 1l7 5-7 5zM8 1h3v10H8z" /></svg>}
              {[...s.t].map((ch) => (ch === "K" ? <SerifK key={ch}>K</SerifK> : <span key={ch}>{ch}</span>))}
            </SideTab>
          ))}
        </SideTabs>

        <Center>
          <Section>
            <PlotColumn>
              <PlotHead>
                <Legend $h={28}>
                  <LegendItem $c="#c8c8c8" $wide>日线(复权)</LegendItem>
                  <LegendItem $c="#e8e8e8">先导智能</LegendItem>
                  <LegendItem $c="#e8e8e8">MA5: 24.13<Arrow up c="#f03030" /></LegendItem>
                  <LegendItem $c="#f0f000">MA10: 24.11<Arrow c="#40c8c8" /></LegendItem>
                  <LegendItem $c="#f070f0">MA20: 23.91<Arrow up c="#f03030" /></LegendItem>
                  <LegendItem $c="#00c800">MA30: 22.93<Arrow up c="#f03030" /></LegendItem>
                  <LegendItem $c="#00c8d8">MA60: 21.43<Arrow up c="#f03030" /></LegendItem>
                </Legend>
                <Tools>
                  {["加自选", "均线", "复权", "叠", "窗", "预测"].map((t) => <Tool key={t}>{t}</Tool>)}
                  <Tool aria-label="跳到最新"><svg width="18" height="18" viewBox="0 0 18 18" fill="#c8c8c8"><path d="M0 6h7V2l7 7-7 7v-4H0zM15 1h3v16h-3z" /></svg></Tool>
                  <Tool $hot aria-label="更多"><Caret $c="#e0e0e0" /></Tool>
                </Tools>
              </PlotHead>
              <MainPlot />
              <Watermark href="#site">公式在线<Domain>www.gszx.com.cn</Domain></Watermark>
              <Mark $x={1545} $y={58}>35.51</Mark>
              <Mark $x={164} $y={748}>16.70</Mark>
              <Mark $x={962} $y={777} $c={RED}><b>q</b></Mark>
              <Mark $x={1605} $y={774}><Badge>榜</Badge></Mark>
            </PlotColumn>
            <Axis $top={20} $h={678}>
              {["36.55", "33.58", "30.60", "27.62", "24.64", "21.66", "18.68"].map((v) => <span key={v}>{v}</span>)}
            </Axis>
          </Section>
          <Section>
            <PlotColumn $floor>
              <Legend $h={29}>
                <LegendItem $c="#f0f000">测试 攻击线: +24.10<Arrow up c="#f03030" /></LegendItem>
                <LegendItem $c="#00e000">趋势线: +24.66<Arrow c="#40c8f0" /></LegendItem>
              </Legend>
              <IndicatorPlot />
              <ExplainButton>指标说明</ExplainButton>
            </PlotColumn>
            <Axis $top={21} $h={343}>
              {["+31.23", "+29.12", "+27.01", "+24.90", "+22.79", "+20.68"].map((v) => <span key={v}>{v}</span>)}
            </Axis>
          </Section>
          <Months>
            {([["03", 0], ["04", 157], ["05", 382], ["06", 667], ["07", 967], ["08", 1312]] as [string, number][]).map(([m, x]) => <Month key={m} $x={x}>{m}</Month>)}
          </Months>
          <BottomTabs>
            <PlainTab>设置</PlainTab>
            <PlainTab>指标平台</PlainTab>
            <SlantTab $first $pad={13}>股林主升浪潜伏点</SlantTab>
            <SlantTab $pad={14}>天天躺赢副图</SlantTab>
            <SlantTab $pad={14}>波段加仓买卖</SlantTab>
            <SlantTab $on $pad={15}>测试</SlantTab>
          </BottomTabs>
        </Center>

        <Panel>
          <PanelHead>
            <RTag>R</RTag>
            <StockName>先导智能<StockCode>300450</StockCode></StockName>
            <TitleIcon $gap={0} aria-label="设置">
              <svg width="22" height="22" viewBox="0 0 22 22" fill="none" stroke="#808080"><circle cx="11" cy="11" r="5.5" strokeWidth="4" /><circle cx="11" cy="11" r="9" strokeWidth="4" strokeDasharray="3.53 3.53" /></svg>
            </TitleIcon>
          </PanelHead>
          <PanelBox>
            <Row $h={33}><Label>委比</Label><Num $w={142}>+100.00%</Num><Num>56040</Num></Row>
            <Book>
              <BookSide><span>卖</span><span>盘</span></BookSide>
              <Levels>
                {SELL.map((n) => <Level key={n}><Num as="b" $c={GRAY} $w={12}>{n}</Num><Num $c="#e0e0e0" $w={151}>–</Num><Num $c={CYAN}>0</Num></Level>)}
              </Levels>
            </Book>
            <Book>
              <BookSide><span>买</span><span>盘</span></BookSide>
              <Levels>
                {BUY.map(([n, p, v]) => <Level key={n}><Num as="b" $c={GRAY} $w={12}>{n}</Num><Num $w={150}>{p}</Num><Num $c={CYAN}>{v}</Num></Level>)}
              </Levels>
            </Book>
            <Notice $h={28}><span>在买盘35.45位置有</span><Red>169手</Red><span>买单!</span><a href="#detail">查看详细</a></Notice>
            <QuoteTable>
              <tbody>
                {QUOTES.map((q) => (
                  <tr key={q[0]}>
                    <th scope="row">{q[0]}</th><ValueCell $c={q[2]}><Amount v={q[1]} /></ValueCell>
                    <th scope="row">{q[3]}</th><ValueCell $c={q[5]}><Amount v={q[4]} /></ValueCell>
                  </tr>
                ))}
              </tbody>
            </QuoteTable>
            <Sector $h={30}>
              <SectorCell href="#sector" $w={130}>电池</SectorCell>
              <SectorCell href="#sector" $w={137} $r><Red>4.09%</Red></SectorCell>
              <Peer>同行业比较</Peer>
            </Sector>
            <TickTable>
              <tbody>
                {TICKS.map((t, i) => (
                  <tr key={i}>
                    <TickCell $c={GRAY} $w={80}>{t.time}</TickCell>
                    <TickCell $c={RED} $w={112} $r>35.51</TickCell>
                    <TickCell $c={t.up ? RED : GREEN} $w={100} $r>{t.v}</TickCell>
                    <ArrowCell><FatArrow up={t.up} /></ArrowCell>
                    <TickCell $c={CYAN} $r>{t.n}</TickCell>
                  </tr>
                ))}
              </tbody>
            </TickTable>
          </PanelBox>
          <PanelTabs>
            <SlantTab $on $first $pad={14}>细</SlantTab>
            {["诊", "分", "筹", "焰", "指", "财"].map((t) => <SlantTab key={t} $pad={14}>{t}</SlantTab>)}
          </PanelTabs>
        </Panel>
      </Columns>

      <IndexBar>
        {INDICES.map((x, i) => (
          <IndexCell key={x[0]} $wide={i === 3}>
            <b>{x[0]}</b><span>{x[1]}</span><span>{x[2]}</span><span>{x[3]}</span><i><Amount v={x[4]} /></i>
          </IndexCell>
        ))}
      </IndexBar>
      <NewsBar>
        {["留言", "解盘", "股市日记", "股灵通", "行情", "7*24小时", "智能助手"].map((t) => <NewsButton key={t}>{t}</NewsButton>)}
        <Ticker>
          <Story href="#n1" $w={178}>将更亮眼</Story>
          <Story href="#n2" $w={493}><time>14:51</time>中国电信与阿里巴巴签署战略合作协议</Story>
          <Story href="#n3" $w={600}><time>14:43</time>上海国投公司总裁戴敏敏带队访问香港 与港交所董事总经理等负</Story>
        </Ticker>
        <SearchLabel htmlFor="code">代码/名称/简拼/功能</SearchLabel>
        <SearchInput id="code" />
      </NewsBar>
      <Taskbar />
      <SiteMark href="#site">股票公式指标网<span>www.gszx.com.cn</span></SiteMark>
    </Page>
  );
}
